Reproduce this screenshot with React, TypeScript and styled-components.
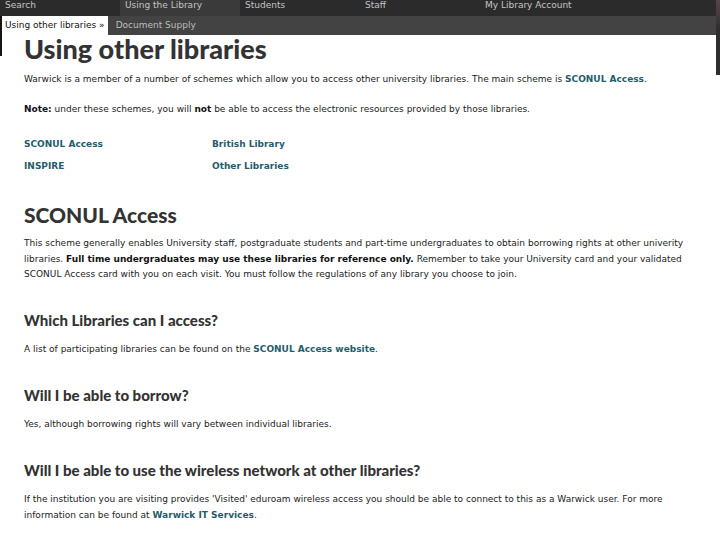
import styled, { createGlobalStyle } from "styled-components";

const GlobalStyle = createGlobalStyle`
  html, body {
    margin: 0;
    padding: 0;
    background: #fff;
  }
  body {
    font-family: "DejaVu Sans", Verdana, sans-serif;
    color: #222;
  }
`;

const topLinks = ["Search", "Using the Library", "Students", "Staff", "My Library Account"];

function App(): JSX.Element {
  return (
    <Page>
      <GlobalStyle />
      <TopNav>
        {topLinks.map((label) => (
          <TopItem key={label} active={label === "Using the Library"}>
            {label}
          </TopItem>
        ))}
      </TopNav>
      <SubNav>
        <SubItem current>Using other libraries »</SubItem>
        <SubItem>Document Supply</SubItem>
      </SubNav>
      <EdgeStrip side="right" />
      <EdgeStrip side="left" />
      <Content>
        <Title>Using other libraries</Title>
        <Para>
          Warwick is a member of a number of schemes which allow you to access other university libraries. The main
          scheme is <A href="#">SCONUL Access</A>.
        </Para>
        <Para>
          <b>Note:</b> under these schemes, you will <b>not</b> be able to access the electronic resources provided by
          those libraries.
        </Para>
        <LinkGrid>
          <A href="#">SCONUL Access</A>
          <A href="#">British Library</A>
          <A href="#">INSPIRE</A>
          <A href="#">Other Libraries</A>
        </LinkGrid>

        <H2>SCONUL Access</H2>
        <Para>
          This scheme generally enables University staff, postgraduate students and part-time undergraduates to obtain
          borrowing rights at other univerity libraries. <b>Full time undergraduates may use these libraries for
          reference only.</b> Remember to take your University card and your validated SCONUL Access card with you on
          each visit. You must follow the regulations of any library you choose to join.
        </Para>

        <H3>Which Libraries can I access?</H3>
        <Para>
          A list of participating libraries can be found on the <A href="#">SCONUL Access website</A>.
        </Para>

        <H3>Will I be able to borrow?</H3>
        <Para>Yes, although borrowing rights will vary between individual libraries.</Para>

        <H3>Will I be able to use the wireless network at other libraries?</H3>
        <Para>
          If the institution you are visiting provides 'Visited' eduroam wireless access you should be able to connect
          to this as a Warwick user. For more information can be found at <A href="#">Warwick IT Services</A>.
        </Para>
      </Content>
    </Page>
  );
}

const Page = styled.div`
  width: 720px;
  height: 540px;
  overflow: hidden;
  position: relative;
`;

const TopNav = styled.nav`
  display: grid;
  grid-template-columns: repeat(5, 120px) 1fr;
  height: 16px;
  background: #2b2b2b;
`;

const TopItem = styled.div<{ active?: boolean }>`
  padding: 0 5px;
  font-size: 9px;
  line-height: 11px;
  color: #c4c4c4;
  background: ${(p) => (p.active ? "#3a3a3a" : "transparent")};
  white-space: nowrap;
`;

// dark strips along the edges of the screen grab
const EdgeStrip = styled.div<{ side: "left" | "right" }>`
  position: absolute;
  ${(p) => (p.side === "right" ? "right: 0; top: 0; width: 4px; height: 75px;" : "left: 0; top: 16px; width: 2px; height: 40px;")}
  background: ${(p) => (p.side === "right" ? "linear-gradient(#5a4448 0, #2e2e2e 30px)" : "#151515")};
`;

const SubNav = styled.div`
  display: flex;
  height: 19px;
  background: #434343;
  padding-left: 2px;
`;

const SubItem = styled.div<{ current?: boolean }>`
  padding: 0 3px;
  margin-right: 5px;
  font-size: 9px;
  line-height: 19px;
  color: ${(p) => (p.current ? "#111" : "#bdbdbd")};
  background: ${(p) => (p.current ? "#fff" : "transparent")};
  white-space: nowrap;
`;

const Content = styled.main`
  display: flex;
  flex-direction: column;
  align-items: flex-start;
  width: 672px;
  padding: 0 24px;
`;

const Title = styled.h1`
  margin: 0;
  font-family: Lato, "Open Sans", sans-serif;
  font-weight: 900;
  font-size: 27px;
  line-height: 28px;
  color: #333;
`;

const H2 = styled.h2`
  margin: 29.5px 0 0;
  font-family: Lato, "Open Sans", sans-serif;
  font-weight: 900;
  font-size: 21px;
  line-height: 24px;
  color: #333;
`;

const H3 = styled.h3`
  margin: 28px 0 0;
  font-family: Lato, "Open Sans", sans-serif;
  font-weight: 900;
  font-size: 15px;
  line-height: 18px;
  color: #333;
`;

const Para = styled.p`
  margin: 14.5px 0 0;
  font-size: 9px;
  line-height: 15.5px;
  color: #222;
  b {
    color: #111;
  }
  ${Title} + & {
    margin-top: 9.25px;
  }
  ${H2} + & {
    margin-top: 9.25px;
  }
  ${H3} + & {
    margin-top: 13.5px;
  }
`;

const LinkGrid = styled.div`
  display: grid;
  grid-template-columns: 188px 188px;
  row-gap: 7px;
  margin-top: 18.75px;
  font-size: 9px;
  line-height: 15px;
`;

const A = styled.a`
  color: #1f5d6b;
  font-weight: bold;
  text-decoration: none;
`;

export default App;
